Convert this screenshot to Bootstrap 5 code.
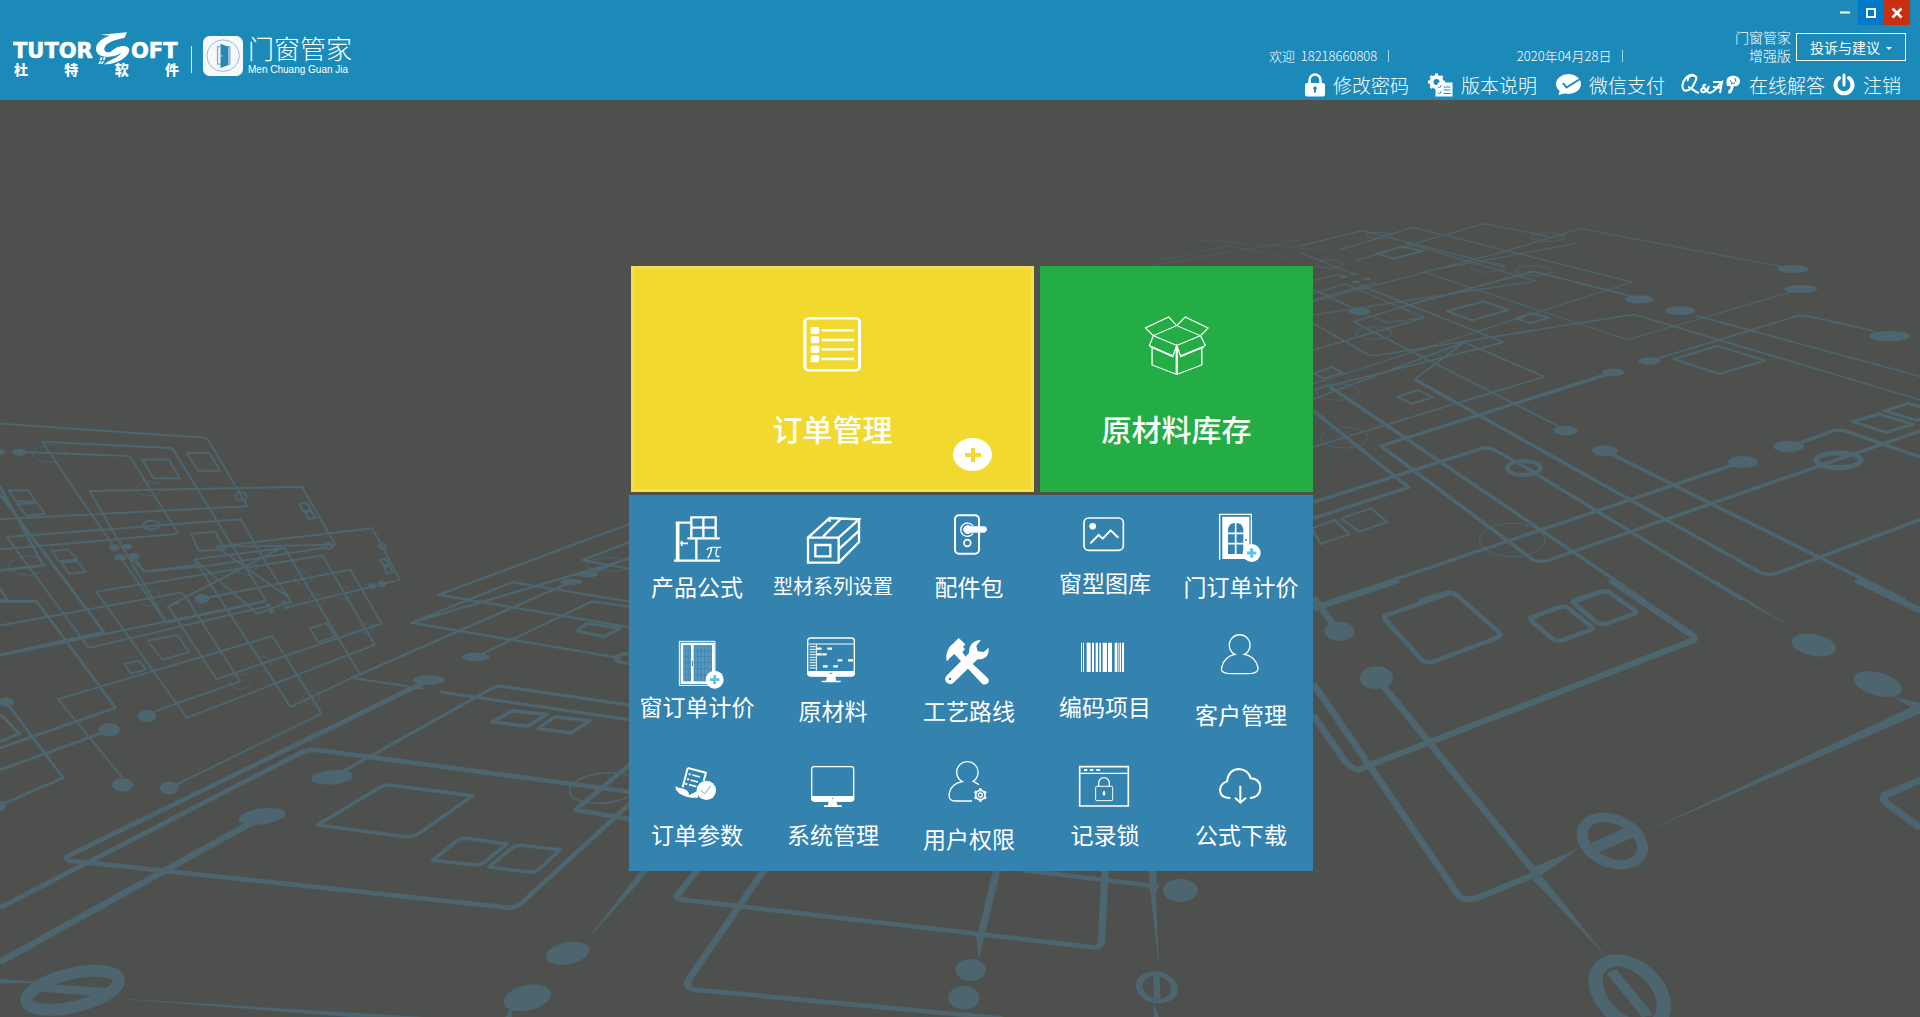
<!DOCTYPE html>
<html lang="zh-CN">
<head>
<meta charset="utf-8">
<meta name="viewport" content="width=device-width, initial-scale=1">
<title>门窗管家</title>
<link href="https://cdn.jsdelivr.net/npm/bootstrap@5.3.0/dist/css/bootstrap.min.css" rel="stylesheet">
<style>
:root{--ui:"Noto Sans CJK SC","Noto Sans",sans-serif}
body{background:#4e504e;font-family:var(--ui);color:#fff}
a{color:#fff;text-decoration:none}
.topbar{background:#1b8ab9;min-height:100px}
.brand-side{padding:31px 0 0 13px}
.brand-word{width:168px}
.brand-caption{font-size:14px;line-height:14px;font-weight:900;width:167px;padding:0 1px;margin-top:-3px}
.brand-rule{width:1px;height:27px;background:#d6eaf3;margin:15px 11px 0 10px}
.brand-icon{margin-top:5px}
.brand-name{font-size:26px;line-height:32px;font-weight:300;margin:1px 0 0 5px}
.brand-latin{font:10px/12px "Liberation Sans",Arial,sans-serif}
.tools-side{width:651px}
.win-bar{padding-right:10px}
.win-btn{width:26px;height:25px;border:0;padding:0;background:transparent;color:#fff;display:flex;align-items:center;justify-content:center}
.win-max{background:#0079c8}
.win-close{background:#c9300f}
.info-row{height:45px;padding-right:14px;font-size:13px;line-height:18px;font-weight:300}
.info-item{margin-top:22px}
.info-item::after{content:"";display:inline-block;width:1px;height:12px;background:#a9d3e6;margin-left:11px;vertical-align:-1px}
.info-date{margin-left:16px}
.edition{font-size:14px;margin:3px 5px 0 0}
.feedback-btn{--bs-btn-color:#fff;--bs-btn-border-color:#fff;--bs-btn-hover-bg:#0079c8;--bs-btn-hover-border-color:#fff;--bs-btn-hover-color:#fff;--bs-btn-border-radius:0;width:110px;height:28px;padding:0;font-size:14px;line-height:20px;margin-top:8px}
.feedback-btn::after{border-width:3px 3px 0;margin-left:6px;vertical-align:3px}
.quick-row{height:30px;padding-right:19px;font-size:19px;line-height:28px;font-weight:300}
.quick-row svg{height:24px}
.quick-link{gap:8px;margin-left:19px}
.quick-near{margin-left:16px}
.quick-last{margin-left:8px}
.desk{min-height:917px;padding:20px 0 0 22px;overflow:hidden}
.circuit{position:absolute;inset:0;width:100%;height:100%;z-index:0}
.board{width:684px;z-index:1}
.big-row{gap:6px;margin:0 0 3px 2px}
.big-tile{height:226px;padding-top:49px;font-size:30px;line-height:40px;font-weight:500}
.tile-order{flex:403;background:#f1d930}
.tile-order .big-tile{border:3px solid #f5df4d;padding-top:46px}
.tile-stock{flex:273;background:#23ad44}
.big-icon{width:65px;height:60px;margin-bottom:33px}
.add-btn{position:absolute;right:42px;bottom:21px;width:39px;height:33px;border:0;padding:0;border-radius:50%;background:#fff;display:flex;align-items:center;justify-content:center}
.panel{background:#3482ae;padding:0 4px 4px 0}
.app-cell{height:124px;font-size:23px;line-height:26px;white-space:nowrap}
.app-small{font-size:20px}
.app-cell svg{width:136px}
.ic-low{height:74px}.ic-mid{height:78px}.ic-tall{height:82px}
.ln{fill:none;stroke:#fff}
</style>
</head>
<body class="d-flex flex-column min-vh-100">
<header class="topbar d-flex justify-content-between">
  <a href="#" class="brand-side d-flex align-items-start">
    <span class="d-block">
      <svg class="brand-word d-block" viewBox="13 31 168 34" height="34" fill="#fff" stroke="#fff">
        <text x="13" y="58" font-family="DejaVu Sans" font-weight="700" font-size="21" stroke-width=".6">TUTOR</text>
        <text x="131" y="58" font-family="DejaVu Sans" font-weight="700" font-size="21" stroke-width=".6">OFT</text>
        <path transform="scale(.33333)" stroke="none" d="M381 97L302 104L330 107C300 116 284 134 289 154C296 174 334 176 364 160C352 174 330 180 312 193C360 192 388 166 388 149C386 132 350 134 332 156C316 160 308 150 316 138C328 124 350 118 373 114ZM302 172h5l-2 9h-6zM311 171h6l-3 10h-5zM298 184h5l-2 8h-6zM306 184h5l-2 8h-6z"/>
      </svg>
      <span class="brand-caption d-flex justify-content-between"><span>杜</span><span>特</span><span>软</span><span>件</span></span>
    </span>
    <span class="brand-rule"></span>
    <svg class="brand-icon" width="40" height="40" viewBox="608 107 121 124" preserveAspectRatio="none">
      <rect x="608" y="107" width="121" height="124" rx="20" fill="#f6f8fa"/>
      <circle cx="669" cy="168" r="49" fill="none" stroke="#8fbcd6" stroke-width="3"/>
      <path d="M661 140h-9v54h9M680 140h9v54h-9" fill="none" stroke="#7fb2cf" stroke-width="4"/>
      <path d="M661 131l24 9v57l-24 9z" fill="#2a86b5"/><circle cx="665" cy="169" r="2" fill="#fff"/>
    </svg>
    <span class="brand-name">门窗管家<span class="brand-latin d-block">Men Chuang Guan Jia</span></span>
  </a>
  <div class="tools-side">
    <div class="win-bar d-flex justify-content-end">
      <button class="win-btn" type="button" aria-label="最小化"><svg width="10" height="10"><path d="M0 4.500h10" stroke="#fff" stroke-width="2"/></svg></button>
      <button class="win-btn win-max" type="button" aria-label="最大化"><svg width="10" height="10"><rect x="1" y="1" width="8" height="8" fill="none" stroke="#fff" stroke-width="2"/></svg></button>
      <button class="win-btn win-close" type="button" aria-label="关闭"><svg width="12" height="12"><path d="M1.500 1.500l9 9M10.500 1.500l-9 9" stroke="#fff" stroke-width="2.500"/></svg></button>
    </div>
    <div class="info-row d-flex align-items-start justify-content-between">
      <span class="info-item">欢迎&nbsp; 18218660808</span>
      <span class="info-item info-date">2020年04月28日</span>
      <div class="d-flex align-items-start">
        <div class="edition text-end">门窗管家<br>增强版</div>
        <button class="btn feedback-btn dropdown-toggle" type="button">投诉与建议</button>
      </div>
    </div>
    <nav class="quick-row d-flex justify-content-end align-items-center">
      <a href="#" class="quick-link d-flex align-items-center">
        <svg width="20" viewBox="0 0 20 24"><path d="M4.500 11V7a5.500 5.500 0 0 1 11 0v4" fill="none" stroke="#fff" stroke-width="2.500"/><rect y="10" width="20" height="13.500" rx="2" fill="#fff"/><path d="M10 13.500a1.800 1.800 0 0 1 1 3.300v2.800h-2v-2.800a1.800 1.800 0 0 1 1-3.300z" fill="#1b8ab9"/></svg>
        修改密码</a>
      <a href="#" class="quick-link d-flex align-items-center">
        <svg width="25" viewBox="0 0 25 24"><circle cx="8.500" cy="9" r="5" fill="none" stroke="#fff" stroke-width="4"/><path d="M8.500 .5v17M0 9h17M2.500 3l12 12M14.500 3l-12 12" stroke="#fff" stroke-width="3"/><circle cx="8.500" cy="9" r="3" fill="#1b8ab9"/><path d="M10 9.500h14.500v14h-17v-4z" fill="#fff"/><path d="M10 13.500l1.500 1.500 2-3M10 19.500l1.500 1.500 2-3M15.500 14h7M15.500 17h7M15.500 20.500h7" fill="none" stroke="#1b8ab9"/></svg>
        版本说明</a>
      <a href="#" class="quick-link d-flex align-items-center">
        <svg width="25" viewBox="0 0 25 24"><ellipse cx="12.500" cy="11" rx="12.500" ry="10" fill="#fff"/><path d="M4 17l-1.500 5 8-2z" fill="#fff"/><path d="M7 10l3.500 4.500L24 6" fill="none" stroke="#1b8ab9" stroke-width="2"/></svg>
        微信支付</a>
      <a href="#" class="quick-link quick-near d-flex align-items-center">
        <svg width="60" viewBox="0 0 60 24" fill="none" stroke="#fff" stroke-width="2"><path d="M13 2C7 0 1 8 1.500 14c.5 6 8 4 11-2s5-9-1-9.500C8 2.500 6 6 7 8M7 14c3 0 6 5 11 6"/><path d="M25 12c-3-1-4 2-1 3-5 0-5 5-1 4s4-4 5-6M22 14l6 6"/><path d="M28 20c6 0 9-8 13-11l-2 11M32 14l9 1M32 9h9"/><path d="M46 13c-1-4-1-9 4-10s10 2 9 6-4 5-6 4c-1 2-1 5-3 7s-4-1-2-3 2-3 1-4z" fill="#fff" stroke="none"/><path d="M49 7l2 3M54 5l1 4M50 11l4-1" stroke="#1b8ab9" stroke-width="1"/></svg>
        在线解答</a>
      <a href="#" class="quick-link quick-last d-flex align-items-center">
        <svg width="22" viewBox="0 0 22 24" fill="none" stroke="#fff" stroke-width="4" stroke-linecap="round"><path d="M6 5a8.500 8.500 0 1 0 10 0" /><path d="M11 2v10" stroke-width="3"/></svg>
        注销</a>
    </nav>
  </div>
</header>
<main class="desk position-relative flex-grow-1 d-flex align-items-center justify-content-center">
  <svg class="circuit" viewBox="0 100 1920 917" preserveAspectRatio="xMidYMid slice" fill="none" stroke="#4d656e" stroke-linejoin="round" aria-hidden="true">
    <!-- left wall and floor -->
    <g transform="translate(0 400) scale(.40816 .39351)" stroke-width="5">
      <path d="M0 60L500 96Q508 97 512 105L606 270L0 303M102 106L418 122Q424 124 428 132L652 510L0 650M104 108L278 372M64 133L310 142Q318 143 322 150L437 340L0 380M312 396L350 430Q355 437 366 436L520 420L803 374M218 231L740 221L822 368L530 373L712 505M220 232L408 566L650 512M16 348L590 303L655 420L713 512M16 348L218 630L650 525M236 487L790 395L918 622L458 808L236 487M0 573L440 490Q450 492 455 500L588 715L430 772L360 800M328 397L352 436L480 420M295 400L408 566M412 524L690 375M476 405L697 376L884 700M412 524L530 709L935 568L858 431L495 505M412 524L440 515M476 405L630 543L715 512M703 527L980 457L912 326L530 373M415 986L788 797L667 600L142 760L300 960M476 405L712 780L862 706"/>
      <path d="M0 512L90 512L283 782L0 884M0 940L268 840M0 220L106 420L0 433M0 240L255 590L0 648M15 768L155 960L0 1030M0 798L48 848L0 868M0 480L20 510H0" stroke-width="7"/>
      <path d="M348 151H414L440 199H376ZM458 135H514L539 180H485ZM467 340L528 335 550 380 488 383ZM362 612L435 597 463 640 398 660ZM760 580L800 567 822 600 780 616ZM305 671L340 663 358 685 320 695ZM22 230L70 229 86 257 40 258ZM43 265L90 262 110 289 65 294ZM127 383L168 380 188 405 145 410ZM150 413L190 410 210 437 170 442ZM733 264L752 262 762 280 742 283ZM747 285L763 282 773 300 757 302ZM932 406L945 404 953 418 939 420ZM942 424L955 422 962 437 948 440Z"/>
      <g stroke-width="2"><ellipse cx="122" cy="136" rx="41" ry="22"/><ellipse cx="365" cy="225" rx="32" ry="18"/><ellipse cx="67" cy="421" rx="45" ry="24"/><ellipse cx="365" cy="504" rx="33" ry="20"/><ellipse cx="603" cy="425" rx="24" ry="18"/><ellipse cx="743" cy="453" rx="20" ry="16"/><ellipse cx="775" cy="509" rx="19" ry="16"/><ellipse cx="844" cy="491" rx="18" ry="16"/><ellipse cx="897" cy="580" rx="16" ry="13"/><ellipse cx="641" cy="671" rx="24" ry="19"/><ellipse cx="588" cy="715" rx="26" ry="19"/><ellipse cx="763" cy="755" rx="20" ry="18"/></g>
      <g><ellipse cx="371" cy="318" rx="20" ry="11"/><ellipse cx="590" cy="245" rx="14" ry="10"/><ellipse cx="803" cy="371" rx="11" ry="8"/><ellipse cx="937" cy="372" rx="8" ry="7"/></g>
      <g fill="#4d656e" stroke="none"><ellipse cx="47" cy="133" rx="19" ry="9"/><ellipse cx="2" cy="133" rx="10" ry="7"/><ellipse cx="280" cy="375" rx="13" ry="8"/><ellipse cx="312" cy="372" rx="12" ry="7"/><ellipse cx="295" cy="400" rx="15" ry="8"/><ellipse cx="328" cy="397" rx="14" ry="8"/><ellipse cx="495" cy="505" rx="18" ry="12"/><ellipse cx="657" cy="523" rx="7" ry="5"/><ellipse cx="666" cy="537" rx="7" ry="5"/><ellipse cx="695" cy="514" rx="7" ry="4"/><ellipse cx="703" cy="527" rx="7" ry="4"/><ellipse cx="911" cy="473" rx="10" ry="8"/><ellipse cx="936" cy="467" rx="10" ry="8"/><ellipse cx="360" cy="803" rx="23" ry="15"/><ellipse cx="268" cy="838" rx="26" ry="17"/><ellipse cx="300" cy="978" rx="26" ry="17"/><ellipse cx="415" cy="986" rx="23" ry="16"/><ellipse cx="15" cy="768" rx="19" ry="12"/><ellipse cx="-10" cy="1032" rx="25" ry="15"/></g>
      <path d="M1545 314L1074 495L1545 578M1545 402L1008 566L1520 656M1440 443L1545 400M1400 462L862 706L1040 734M1545 360L1428 407L1545 430" stroke-width="6"/>
      <path d="M1008 566L1255 463L1545 513M1165 653L1450 512L1545 526" stroke-width="6"/>
      <path d="M1078 742L1545 813M830 950L1210 730Q1225 725 1240 729L1545 776M1413 587L1438 568 1520 580 1480 601Z" stroke-width="8"/>
      <path d="M1050 712L165 1160Q155 1170 180 1172L1245 1290Q1260 1292 1280 1276L1560 1010M0 1290L740 895Q755 888 775 889L1560 998M1545 925L1410 1042L1545 1065" stroke-width="12"/>
      <path d="M0 1428L640 1060" stroke-width="16"/>
      <path d="M778 1080L930 985Q945 977 960 979L1158 1006L1028 1100Q1012 1112 990 1109ZM1206 818L1255 790 1340 799 1292 829ZM1318 835L1360 805 1445 816 1398 846ZM1060 1170L1120 1120Q1130 1112 1145 1114L1242 1128L1185 1176Q1175 1183 1160 1181ZM1198 1187L1255 1138Q1265 1130 1280 1132L1372 1143L1320 1193Q1310 1202 1290 1199Z" stroke-width="9"/>
      <ellipse cx="1480" cy="986" rx="85" ry="38" stroke-width="4" transform="rotate(-6 1480 986)"/><ellipse cx="1495" cy="418" rx="60" ry="17" stroke-width="2"/><ellipse cx="1540" cy="657" rx="32" ry="12" stroke-width="9"/>
      <ellipse cx="178" cy="1500" rx="116" ry="42" stroke-width="30" transform="rotate(-14 178 1500)"/>
      <g fill="#4d656e" stroke="none"><path d="M110 1484L265 1494 235 1515 95 1503ZM0 1471L110 1480 0 1483ZM260 1519L1040 1568H860ZM1570 1205L1440 1370 1570 1222Z"/><ellipse cx="1440" cy="443" rx="26" ry="8"/><ellipse cx="1400" cy="462" rx="27" ry="8"/><ellipse cx="1165" cy="653" rx="35" ry="11"/><ellipse cx="1050" cy="712" rx="39" ry="12"/><ellipse cx="814" cy="959" rx="51" ry="18" transform="rotate(-5 814 959)"/><ellipse cx="642" cy="1058" rx="58" ry="20" transform="rotate(-8 642 1058)"/><ellipse cx="1391" cy="1406" rx="54" ry="28" transform="rotate(-12 1391 1406)"/><ellipse cx="1292" cy="1519" rx="59" ry="32" transform="rotate(-14 1292 1519)"/><path d="M1240 1568L1253 1540V1568Z"/></g>
    </g>
    <!-- far right floor -->
    <path d="M1150 266L1300 240M1150 262L1230 246 1290 258M1200 240L1330 250" stroke-width="1" opacity=".5"/>
    <g transform="translate(1300 200) scale(.39541 .33333)" stroke-width="5">
      <path d="M0 138L158 92L515 200M140 182L465 71L630 110M100 150L285 82L840 246L33 552M33 305L530 150L710 86L1240 205M700 130L310 215L820 416Q828 423 838 416L1260 270M33 242L100 222M33 345L596 243L270 130M33 280L115 252L315 353L220 368L150 333M0 157L135 222M33 300L195 247" stroke-width="4" opacity=".85"/>
      <path d="M33 268L150 333M150 255L515 427L33 570M33 450L315 353M135 365L260 320L590 214L850 292M135 365L672 690M33 370L170 462Q185 470 200 465L835 345Q845 343 855 347L1570 600M1000 346L1570 530M290 538L415 427L618 530L33 741M884 483L1250 350Q1270 344 1290 350L1450 392M33 598L415 427" stroke-width="5"/>
      <path d="M290 538L1160 1115Q1185 1130 1210 1118L1570 958M792 517L205 738L590 1080Q605 1088 630 1080L1570 692M33 632L275 862L33 955M33 907L460 745Q475 740 490 749L560 795L1120 1200M75 560L870 1200M770 752L1530 1200M1120 785L85 1200M1237 740L1350 692Q1365 688 1380 693L1570 772M300 1200L370 1178Q385 1173 395 1184L410 1200M690 1200L760 1174Q772 1170 782 1177L810 1200" stroke-width="10"/>
      <path d="M195 160L260 140 310 153 236 176ZM372 333L464 304 527 330 435 361ZM547 355L585 340 630 353 583 370ZM945 477L1055 438 1177 481 1060 522ZM247 590L300 570 336 592 283 612ZM35 520L80 501 108 518 58 535ZM105 955L180 925 220 966 150 995ZM30 985L88 960 125 1003 52 1032Z" stroke-width="6"/>
      <path d="M1478 632L1540 610 1600 635 1560 662ZM1398 665L1465 642 1550 673 1482 697Z" stroke-width="9"/>
      <g stroke-width="3" opacity=".8"><ellipse cx="628" cy="112" rx="41" ry="13"/><ellipse cx="475" cy="202" rx="42" ry="15"/><ellipse cx="592" cy="212" rx="45" ry="15"/><ellipse cx="200" cy="106" rx="34" ry="9"/><ellipse cx="74" cy="192" rx="35" ry="12"/><ellipse cx="186" cy="399" rx="46" ry="19"/><ellipse cx="95" cy="576" rx="53" ry="25"/><ellipse cx="112" cy="713" rx="59" ry="31"/><ellipse cx="537" cy="1020" rx="83" ry="50"/></g>
      <ellipse cx="566" cy="804" rx="42" ry="21" stroke-width="12"/><ellipse cx="1362" cy="781" rx="56" ry="22" stroke-width="15"/>
      <g fill="#4d656e" stroke="none"><ellipse cx="1247" cy="207" rx="39" ry="12"/><ellipse cx="1266" cy="267" rx="42" ry="12"/><ellipse cx="858" cy="298" rx="36" ry="12"/><ellipse cx="962" cy="332" rx="38" ry="13"/><ellipse cx="1491" cy="408" rx="52" ry="16"/><ellipse cx="884" cy="483" rx="28" ry="11"/><ellipse cx="792" cy="517" rx="28" ry="11"/><ellipse cx="150" cy="334" rx="28" ry="11"/><ellipse cx="672" cy="692" rx="31" ry="14"/><ellipse cx="771" cy="752" rx="33" ry="16"/><ellipse cx="1120" cy="786" rx="38" ry="18"/><ellipse cx="1236" cy="739" rx="39" ry="17"/><ellipse cx="136" cy="221" rx="10" ry="3"/><ellipse cx="110" cy="230" rx="10" ry="4"/><ellipse cx="142" cy="246" rx="10" ry="4"/><ellipse cx="170" cy="237" rx="10" ry="4"/></g>
    </g>
    <!-- near right floor -->
    <g transform="translate(1300 580) scale(.39541 .33333)" stroke-width="18">
      <path d="M33 52L90 142M33 86L250 0M785 0L985 160Q1010 178 985 185L150 568Q135 572 115 545L33 405M33 310L400 945Q410 965 450 953L600 880M205 310L600 885M1405 0L1570 92" stroke-width="18"/>
      <path d="M213 108L370 43Q385 36 397 46L502 155Q512 165 495 175L340 244Q322 252 308 240L215 118ZM583 114L655 82Q668 77 678 84L735 138Q745 146 733 151L665 180Q652 185 640 178L588 126ZM690 67L760 36Q772 32 783 38L847 92Q854 98 842 103L780 129Q765 135 750 127Z" stroke-width="13"/>
      <ellipse cx="790" cy="783" rx="84" ry="62" stroke-width="28" transform="rotate(38 790 783)"/><ellipse cx="834" cy="1240" rx="110" ry="72" stroke-width="36" transform="rotate(55 834 1240)"/>
      <path d="M1570 600L1480 645Q1468 658 1490 676L1570 745" stroke-width="20"/>
      <g fill="#4d656e" stroke="none"><path d="M735 790L820 745 845 771 752 818ZM590 862L708 803 608 888ZM775 1180L800 1168 895 1305 865 1311ZM587 898L612 888 775 1130ZM870 757L1570 400V370L1500 350 1545 382ZM1030 0L1050 0 1260 154Z"/><ellipse cx="100" cy="154" rx="38" ry="29"/><ellipse cx="193" cy="293" rx="42" ry="34"/><ellipse cx="1299" cy="195" rx="57" ry="32" transform="rotate(15 1299 195)"/><ellipse cx="1461" cy="312" rx="64" ry="34" transform="rotate(20 1461 312)"/></g>
    </g>
    <!-- floor below the board -->
    <g transform="translate(500 860) scale(.5230 .33333)" stroke-width="13">
      <path d="M378 30L340 103Q335 115 350 119L1135 262Q1148 264 1150 245L1157 30M505 30L360 360Q355 385 370 389L960 475M950 30L920 225M1000 30L1260 80M1248 30L1249 95" stroke-width="14"/>
      <ellipse cx="1256" cy="382" rx="33" ry="42" transform="rotate(-15 1256 382)"/>
      <g fill="#4d656e" stroke="none"><path d="M270 30H285L165 240ZM910 225H927L915 300ZM1243 90H1254L1260 325ZM1249 345H1261L1263 415H1250ZM1250 428L1260 471H1250ZM10 471L22 448V471Z"/><ellipse cx="900" cy="330" rx="29" ry="33"/><ellipse cx="887" cy="413" rx="30" ry="35"/><ellipse cx="1301" cy="91" rx="33" ry="35"/></g>
    </g>
  </svg>

  <div class="board position-relative">
    <div class="big-row d-flex">
      <div class="tile-order position-relative">
        <a href="#" class="big-tile d-flex flex-column align-items-center">
          <svg class="big-icon" viewBox="404 165 145 180" preserveAspectRatio="none"><rect x="415" y="175" width="122" height="156" rx="10" class="ln" stroke-width="7"/><path d="M452 211H524M452 240H524M452 268H524M452 297H524" class="ln" stroke-width="7"/><g fill="#fff"><rect x="428" y="201" width="19" height="21" rx="4"/><rect x="428" y="229" width="19" height="21" rx="4"/><rect x="428" y="257" width="19" height="22" rx="4"/><rect x="428" y="286" width="19" height="21" rx="4"/></g></svg>
          订单管理</a>
        <button class="add-btn" type="button" aria-label="新建订单"><svg width="16" height="14"><path d="M0 7h16M8 0v14" stroke="#f1d930" stroke-width="4"/></svg></button>
      </div>
      <div class="tile-stock">
        <a href="#" class="big-tile d-flex flex-column align-items-center">
          <svg class="big-icon" viewBox="1175 165 145 180" preserveAspectRatio="none"><g class="ln" stroke-width="3"><path d="M1248 197L1301 227L1248 256L1196 227ZM1248 197L1230 171L1178 204L1196 227M1248 197L1267 171L1318 204L1301 227M1196 227L1187 257L1239 290L1248 256L1257 290L1312 256L1301 227M1193 262V315L1248 343L1304 315V262"/><path d="M1248 262V343M1190 260L1239 288M1309 260L1257 288" stroke-width="5"/></g></svg>
          原材料库存</a>
      </div>
    </div>

    <div class="panel">
    <div class="row row-cols-5 g-0 text-center">
      <a href="#" class="col app-cell d-flex flex-column align-items-center">
        <svg class="ic-mid" viewBox="12 15 408 234"><g class="ln" stroke-width="7"><path d="M147 212H285M156 210V98H197M160 98V210M214 148V210M187 145H284M199 141V82H272V141M199 113H272M235 82V141"/><path d="M166 160H189M170 152V168" stroke-width="5"/><path d="M245 180Q250 172 262 172H288M260 173Q258 192 248 204M277 173Q266 203 283 199" stroke-width="4"/></g></svg>产品公式</a>
      <a href="#" class="col app-cell app-small d-flex flex-column align-items-center">
        <svg class="ic-mid" viewBox="420 15 408 234"><g class="ln" stroke-width="7"><path d="M549 143H641V218H549ZM571 165H616V199H571ZM549 143L614 84L702 88L641 143M594 140L650 84M641 218L702 156V88M641 178L702 122M614 84V96"/></g></svg>型材系列设置</a>
      <a href="#" class="col app-cell d-flex flex-column align-items-center">
        <svg class="ic-mid" viewBox="-6 15 408 234"><g class="ln"><rect x="156" y="76" width="72" height="115" rx="12" stroke-width="6"/><path d="M210 108A20 20 0 1 0 210 130" stroke-width="4"/><circle cx="193" cy="159" r="10" stroke-width="5"/></g><path d="M203 109H245Q252 110 252 118T245 128H203A13 13 0 1 1 203 109Z" fill="#fff"/></svg>配件包</a>
      <a href="#" class="col app-cell d-flex flex-column align-items-center">
        <svg class="ic-low" viewBox="201 15 408 222"><rect x="342" y="84" width="118" height="97" rx="14" class="ln" stroke-width="5"/><circle cx="368" cy="109" r="10" fill="#fff"/><path d="M361 160L386 135L398 146L422 121L445 143" class="ln" stroke-width="6"/></svg>窗型图库</a>
      <a href="#" class="col app-cell d-flex flex-column align-items-center">
        <svg class="ic-mid" viewBox="609 15 408 234"><path d="M749 209V73H844V190" class="ln" stroke-width="4"/><path d="M757 80H838V207H757Z" fill="#fff"/><path d="M774 192V116Q779 98 797 98T820 116V192Z" fill="#3482ae"/><path d="M797 98V192M774 130H820M774 161H820" class="ln" stroke-width="5"/><circle cx="828" cy="150" r="3" fill="#3482ae"/><circle cx="845" cy="189" r="27" fill="#fff"/><path d="M845 175V203M831 189H859" stroke="#56c5ea" stroke-width="9"/></svg>门订单计价</a>

      <a href="#" class="col app-cell d-flex flex-column align-items-center">
        <svg class="ic-low" viewBox="12 387 408 222"><g class="ln"><path d="M163 586V454H270V586Z" stroke-width="3"/><path d="M171 578V462H265V578ZM202 462V578" stroke-width="8"/></g><path d="M176 466H197V573H176ZM208 466H260V573H208Z" fill="#5798bf"/><path d="M183 466V574M190 466V574M218 466V574M228 466V574M239 466V574M250 466V574M175 482H197M175 500H197M175 518H197M175 536H197M175 554H197M208 482H260M208 500H260M208 518H260M208 536H260M208 554H260" stroke="#4388b4" stroke-width="3"/><path d="M202 512V528" stroke="#3482ae" stroke-width="3"/><circle cx="269" cy="569" r="27" fill="#fff"/><path d="M269 555V583M255 569H283" stroke="#56c5ea" stroke-width="8"/></svg>窗订单计价</a>
      <a href="#" class="col app-cell d-flex flex-column align-items-center">
        <svg class="ic-mid" viewBox="420 387 408 234"><rect x="548" y="444" width="140" height="114" rx="9" class="ln" stroke-width="4"/><path d="M547 543H690V550Q690 559 681 559H556Q547 559 547 550ZM606 559H631L634 572H647V577H590V572H603Z" fill="#fff"/><path d="M550 462H686M574 462V542" class="ln" stroke-width="3"/><path d="M554 470H572M554 478H572M554 486H572M554 494H572M554 502H572M554 510H572M554 518H572M554 526H572M554 534H572" class="ln" stroke-width="3"/><path d="M576 476H590M607 476H621M576 493H590M592 493H605M638 511H652M669 511H684M594 529H608M625 529H639" class="ln" stroke-width="7"/><path d="M614 550H622" stroke="#3482ae" stroke-width="3"/></svg>原材料</a>
      <a href="#" class="col app-cell d-flex flex-column align-items-center">
        <svg class="ic-mid" viewBox="-6 387 408 234"><g fill="#fff"><path d="M167 444L187 463L180 471L186 478L178 486L191 505L254 564Q261 573 254 580Q247 587 237 581L154 492L138 506Q132 518 131 510Q127 499 134 482Q139 467 150 461Z"/><path d="M198 489Q198 452 234 450L220 467L224 484L242 486L257 473Q260 508 224 508L150 580Q140 586 130 577Q123 568 130 558Z"/></g><circle cx="141" cy="567" r="4" fill="#3482ae"/></svg>工艺路线</a>
      <a href="#" class="col app-cell d-flex flex-column align-items-center">
        <svg class="ic-low" viewBox="201 387 408 222"><path d="M333 458h3v88h-3zM339 458h3v88h-3zM350 458h12v88h-12zM366 458h6v88h-6zM377 458h7v88h-7zM388 458h5v88h-5zM398 458h13v88h-13zM414 458h12v88h-12zM434 458h8v88h-8zM445 458h3v88h-3zM450 458h3v88h-3zM456 458h6v88h-6z" fill="#fff"/></svg>编码项目</a>
      <a href="#" class="col app-cell d-flex flex-column align-items-center">
        <svg class="ic-tall" viewBox="609 387 408 246"><path d="M795 493A31 31 0 1 1 823 493Q855 498 864 532Q866 548 846 550Q809 552 772 550Q751 548 755 532Q762 500 795 493Z" class="ln" stroke-width="4"/></svg>客户管理</a>

      <a href="#" class="col app-cell d-flex flex-column align-items-center">
        <svg class="ic-mid" viewBox="12 759 408 234"><g transform="translate(0 750)"><path d="M188 84L243 98L236 122M188 84L173 142" class="ln" stroke-width="6" stroke-linejoin="round"/><path d="M152 138Q158 145 168 144Q194 150 192 166L218 152L219 173H200Q166 170 152 148Z" fill="#fff"/><path d="M202 105L225 111M196 120L219 126M192 134L214 140" class="ln" stroke-width="5"/><path d="M191 103h6M186 118h6M181 132h6" class="ln" stroke-width="6"/><circle cx="244" cy="151" r="29" fill="#fff"/><path d="M226 150L239 162L257 137" fill="none" stroke="#56b5e0" stroke-width="3"/></g></svg>订单参数</a>
      <a href="#" class="col app-cell d-flex flex-column align-items-center">
        <svg class="ic-mid" viewBox="420 9 408 234"><rect x="560" y="80" width="126" height="103" rx="8" class="ln" stroke-width="4"/><path d="M559 168H688V178Q686 185 680 185H566Q560 184 559 178ZM611 185H635L637 196H650V201H597V196H609Z" fill="#fff"/><circle cx="623" cy="175" r="2" fill="#3482ae"/></svg>系统管理</a>
      <a href="#" class="col app-cell d-flex flex-column align-items-center">
        <svg class="ic-tall" viewBox="-6 759 408 246"><path d="M228 884L210 874A32 32 0 1 0 178 875Q140 882 138 918Q139 932 156 933H207" class="ln" stroke-width="4"/><circle cx="232" cy="915" r="14" class="ln" stroke-width="5"/><path d="M232 895V902M232 928V935M215 905L221 909M249 905L243 909M215 925L221 921M249 925L243 921" class="ln" stroke-width="8"/><circle cx="232" cy="915" r="6" class="ln" stroke-width="4"/></svg>用户权限</a>
      <a href="#" class="col app-cell d-flex flex-column align-items-center">
        <svg class="ic-mid" viewBox="201 9 408 234"><g class="ln"><path d="M329 80H475V198H329Z" stroke-width="5"/><path d="M329 100H475" stroke-width="4"/><path d="M342 90H352M360 90H370M379 90H390" stroke-width="6"/><rect x="377" y="139" width="51" height="43" rx="3" stroke-width="3"/><path d="M386 138V129A16 16 0 0 1 418 129V138" stroke-width="4"/></g><ellipse cx="402" cy="160" rx="4" ry="7" fill="#fff"/></svg>记录锁</a>
      <a href="#" class="col app-cell d-flex flex-column align-items-center">
        <svg class="ic-mid" viewBox="609 9 408 234"><path d="M781 174Q751 175 750 151Q751 130 771 124Q776 88 807 87Q835 89 842 115Q872 117 871 147Q867 173 840 174M811 137V186M795 173L811 188L828 173" class="ln" stroke-width="6"/></svg>公式下载</a>
    </div>
    </div>
  </div>
</main>
<script src="https://cdn.jsdelivr.net/npm/bootstrap@5.3.0/dist/js/bootstrap.bundle.min.js"></script>
</body>
</html>
